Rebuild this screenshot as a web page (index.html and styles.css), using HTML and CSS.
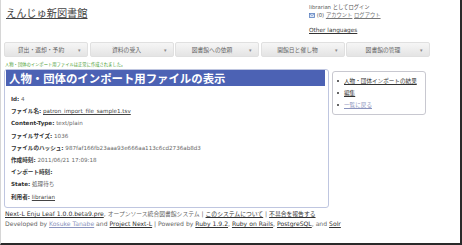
FILE: index.html
```html
<!DOCTYPE html>
<html>
<head>
  <meta charset="utf-8">
  <link rel="stylesheet" href="styles.css">
  <title>人物・団体のインポート用ファイルの表示 - えんじゅ新図書館</title>
</head>
<body>
  <div class="page">
    <div class="header">
      <h1 class="site-title"><a href="#">えんじゅ新図書館</a></h1>
      <div class="user-menu">
        <div>librarian としてログイン</div>
        <div class="user-links">
          <svg class="mail-icon" width="6" height="5" viewBox="0 0 6 5"><rect x="0.5" y="0.5" width="5" height="4" fill="#dce6f5" stroke="#5a7fc0" stroke-width="0.8"/><path d="M0.6 0.7 L3 2.7 L5.4 0.7" fill="none" stroke="#5a7fc0" stroke-width="0.6"/></svg>
          (0) <a href="#">アカウント</a> <a href="#">ログアウト</a>
        </div>
        <div class="lang"><a href="#">Other languages</a></div>
      </div>
    </div>

    <ul class="nav">
      <li><span>貸出・返却・予約</span><span class="arrow">▾</span></li>
      <li><span>資料の受入</span><span class="arrow">▾</span></li>
      <li><span>図書館への依頼</span><span class="arrow">▾</span></li>
      <li><span>開館日と催し物</span><span class="arrow">▾</span></li>
      <li><span>図書館の管理</span><span class="arrow">▾</span></li>
    </ul>

    <p class="notice">人物・団体のインポート用ファイルは正常に作成されました。</p>

    <div class="content-wrap">
      <div class="main-box">
        <h2 class="box-title">人物・団体のインポート用ファイルの表示</h2>
        <div class="fields">
          <p><strong>Id:</strong> 4</p>
          <p><strong>ファイル名:</strong> <a href="#">patron_import_file_sample1.tsv</a></p>
          <p><strong>Content-Type:</strong> text/plain</p>
          <p><strong>ファイルサイズ:</strong> 1036</p>
          <p><strong>ファイルのハッシュ:</strong> 987faf166fb23aaa93e666aa113c6cd2736ab8d3</p>
          <p><strong>作成時刻:</strong> 2011/06/21 17:09:18</p>
          <p><strong>インポート時刻:</strong></p>
          <p><strong>State:</strong> 処理待ち</p>
          <p><strong>利用者:</strong> <a href="#" class="visited">librarian</a></p>
        </div>
      </div>
      <div class="side-box">
        <ul>
          <li><a href="#">人物・団体インポートの結果</a></li>
          <li><a href="#">編集</a></li>
          <li><a href="#" class="visited">一覧に戻る</a></li>
        </ul>
      </div>
    </div>

    <div class="footer">
      <div><a href="#">Next-L Enju Leaf 1.0.0.beta9.pre</a>, <span class="ja">オープンソース統合図書館システム</span> | <a href="#" class="ja">このシステムについて</a> | <a href="#" class="ja">不具合を報告する</a></div>
      <div>Developed by <a href="#" class="visited">Kosuke Tanabe</a> and <a href="#">Project Next-L</a> | Powered by <a href="#">Ruby 1.9.2</a>, <a href="#">Ruby on Rails</a>, <a href="#">PostgreSQL</a>, and <a href="#">Solr</a></div>
    </div>
  </div>
</body>
</html>
```

FILE: styles.css
```css
body {
  margin: 0;
  padding: 0;
  font-family: "DejaVu Sans", Verdana, "Noto Sans CJK JP", sans-serif;
  color: #444;
  background-color: #fff;
}

a {
  color: #333;
}

a.visited {
  color: #8a93bd;
}

.page {
  width: 462px;
  height: 245px;
  box-sizing: border-box;
  border-left: 1px solid #d6d6d6;
  border-right: 2px solid #2a2a2a;
  border-bottom: 2px solid #2a2a2a;
  overflow: hidden;
}

.header {
  display: grid;
  grid-template-columns: 303px 1fr;
  padding-left: 5px;
  height: 42px;
}

.site-title {
  margin: 0;
  padding-top: 6px;
  font-family: "Noto Sans CJK JP", sans-serif;
  font-size: 10.2px;
  font-weight: normal;
  line-height: 14px;
}

.site-title a {
  color: #444;
}

.user-menu {
  padding-top: 3px;
  font-family: "DejaVu Sans", "Noto Sans CJK JP", sans-serif;
  font-size: 5.3px;
  line-height: 8px;
  color: #555;
}

.user-links a {
  color: #777;
}

.mail-icon {
  vertical-align: -0.5px;
}

.lang {
  margin-top: 7px;
  font-size: 5.8px;
}

.lang a {
  color: #333;
}

.nav {
  display: flex;
  gap: 1.5px;
  list-style: none;
  margin: 0 0 0 3px;
  padding: 0;
}

.nav li {
  display: flex;
  align-items: center;
  justify-content: center;
  position: relative;
  width: 84px;
  height: 15px;
  box-sizing: border-box;
  background: linear-gradient(#f6f6f6, #e4e4e4);
  border: 1px solid #e0e0e0;
  border-radius: 2px;
  font-family: "Noto Sans CJK JP", sans-serif;
  font-size: 5.8px;
  color: #666;
  padding-right: 10px;
}

.nav .arrow {
  position: absolute;
  right: 6px;
  font-size: 5px;
  color: #888;
}

.notice {
  margin: 0;
  padding: 3px 0 0 4px;
  height: 9px;
  font-family: "Noto Sans CJK JP", sans-serif;
  font-size: 4.3px;
  line-height: 8px;
  color: #3f9a2c;
}

.content-wrap {
  display: flex;
  align-items: flex-start;
  gap: 3px;
  padding-left: 3px;
}

.main-box {
  width: 325px;
  box-sizing: border-box;
  border: 1px solid #bfc6e0;
  border-radius: 3px;
  padding: 0 3px 0 1px;
}

.box-title {
  margin: 0;
  height: 16px;
  padding-left: 3px;
  background-color: #4c62b4;
  color: #fff;
  font-family: "Noto Sans CJK JP", sans-serif;
  font-size: 11.4px;
  font-weight: bold;
  line-height: 16px;
}

.fields {
  padding: 7px 0 4px 5px;
}

.fields p {
  margin: 0;
  font-size: 5.6px;
  line-height: 12.2px;
  color: #666;
}

.fields strong {
  color: #333;
}

.fields a {
  color: #444;
}

.side-box {
  width: 94px;
  box-sizing: border-box;
  margin-top: 2px;
  border: 1px solid #c8c8d0;
  border-radius: 3px;
  padding: 3px 0 3px 4px;
}

.side-box ul {
  list-style: none;
  margin: 0;
  padding: 0;
}

.side-box li {
  display: flex;
  align-items: center;
  font-family: "Noto Sans CJK JP", sans-serif;
  font-size: 5.6px;
  line-height: 12px;
}

.side-box li::before {
  content: "";
  width: 2px;
  height: 2px;
  border-radius: 1px;
  background-color: #333;
  margin-right: 5px;
}

.footer {
  padding: 1px 0 0 4px;
  font-size: 6.1px;
  line-height: 10px;
  color: #666;
}

.footer .ja {
  font-family: "Noto Sans CJK JP", sans-serif;
  font-size: 5.8px;
}
```
